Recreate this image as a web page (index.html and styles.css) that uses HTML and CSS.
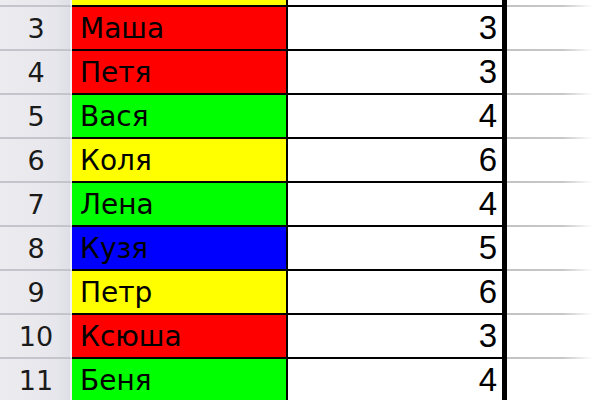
FILE: index.html
```html
<!DOCTYPE html>
<html>
<head>
<meta charset="utf-8">
<link rel="stylesheet" href="styles.css">
</head>
<body>
<div class="sheet">
  <div class="row partial">
    <div class="hdr"></div>
    <div class="name c-yellow"></div>
    <div class="val"></div>
    <div class="rest"></div>
  </div>
  <div class="row">
    <div class="hdr">3</div>
    <div class="name c-red">Маша</div>
    <div class="val">3</div>
    <div class="rest"></div>
  </div>
  <div class="row">
    <div class="hdr">4</div>
    <div class="name c-red">Петя</div>
    <div class="val">3</div>
    <div class="rest"></div>
  </div>
  <div class="row">
    <div class="hdr">5</div>
    <div class="name c-green">Вася</div>
    <div class="val">4</div>
    <div class="rest"></div>
  </div>
  <div class="row">
    <div class="hdr">6</div>
    <div class="name c-yellow">Коля</div>
    <div class="val">6</div>
    <div class="rest"></div>
  </div>
  <div class="row">
    <div class="hdr">7</div>
    <div class="name c-green">Лена</div>
    <div class="val">4</div>
    <div class="rest"></div>
  </div>
  <div class="row">
    <div class="hdr">8</div>
    <div class="name c-blue">Кузя</div>
    <div class="val">5</div>
    <div class="rest"></div>
  </div>
  <div class="row">
    <div class="hdr">9</div>
    <div class="name c-yellow">Петр</div>
    <div class="val">6</div>
    <div class="rest"></div>
  </div>
  <div class="row">
    <div class="hdr">10</div>
    <div class="name c-red">Ксюша</div>
    <div class="val">3</div>
    <div class="rest"></div>
  </div>
  <div class="row">
    <div class="hdr">11</div>
    <div class="name c-green">Беня</div>
    <div class="val">4</div>
    <div class="rest"></div>
  </div>
</div>
</body>
</html>
```

FILE: styles.css
```css
html, body {
  margin: 0;
  padding: 0;
  background: #ffffff;
  overflow: hidden;
}

.sheet {
  width: 600px;
  height: 400px;
  overflow: hidden;
}

.row {
  display: grid;
  grid-template-columns: 72px 216px 219px 1fr;
  height: 44px;
}

.row.partial {
  height: 7px;
}

.hdr {
  background: linear-gradient(to right, #ececf0 0%, #e6e6ec 80%, #dedee6 100%);
  border-right: 2px solid #f4f4f6;
  border-bottom: 2px solid #c4c4cc;
  font-family: "DejaVu Sans", sans-serif;
  font-size: 27px;
  color: #1a1a1a;
  display: flex;
  align-items: center;
  justify-content: center;
  padding-top: 1px;
  padding-left: 2px;
  box-sizing: border-box;
}

.name {
  border-right: 2px solid #000;
  border-bottom: 2px solid #000;
  font-family: "DejaVu Sans", sans-serif;
  font-size: 28px;
  color: #000;
  display: flex;
  align-items: center;
  padding-left: 8px;
  padding-top: 1px;
  box-sizing: border-box;
}

.val {
  border-right: 5px solid #000;
  border-bottom: 2px solid #000;
  font-family: "Liberation Sans", sans-serif;
  font-size: 33px;
  color: #000;
  display: flex;
  align-items: center;
  justify-content: flex-end;
  padding-right: 5px;
  box-sizing: border-box;
}

.rest {
  background: linear-gradient(to right, #c2c2c2 0%, #c8c8c8 60%, #ffffff 92%) no-repeat left bottom / 100% 2px;
}

.c-red { background: #ff0000; }
.c-yellow { background: #ffff00; }
.c-green { background: #00ff00; }
.c-blue { background: #0000ff; }
```
